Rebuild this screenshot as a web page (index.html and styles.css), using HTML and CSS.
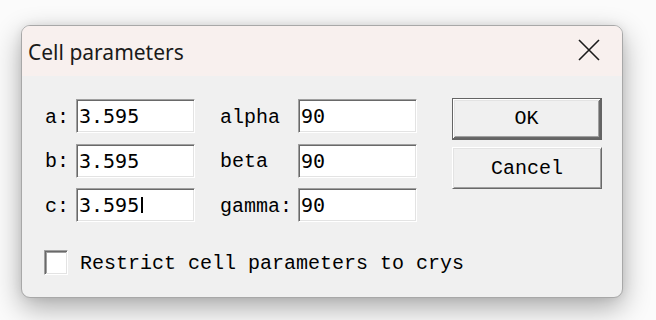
FILE: index.html
```html
<!DOCTYPE html>
<html lang="en">
<head>
    <meta charset="UTF-8">
    <meta name="viewport" content="width=device-width, initial-scale=1.0">
    <title>Cell parameters</title>
    <link rel="stylesheet" href="styles.css">
</head>
<body>

    <div class="window">
        <div class="titlebar">
            <span class="title">Cell parameters</span>
            <span class="close">
                <svg width="22" height="22" viewBox="0 0 22 22">
                    <path d="M1 1 L21 21 M21 1 L1 21" stroke="#1b1b1b" stroke-width="1.6" fill="none"/>
                </svg>
            </span>
        </div>

        <div class="content">
            <div class="top">
                <div class="params">
                    <span class="label">a:</span>
                    <span class="field">3.595</span>
                    <span class="label angle">alpha</span>
                    <span class="field">90</span>

                    <span class="label">b:</span>
                    <span class="field">3.595</span>
                    <span class="label angle">beta</span>
                    <span class="field">90</span>

                    <span class="label">c:</span>
                    <span class="field">3.595<span class="caret"></span></span>
                    <span class="label angle">gamma:</span>
                    <span class="field">90</span>
                </div>

                <div class="buttons">
                    <button class="btn default">OK</button>
                    <button class="btn">Cancel</button>
                </div>
            </div>

            <label class="check">
                <span class="box"></span>
                <span class="label">Restrict cell parameters to crys</span>
            </label>
        </div>
    </div>

</body>
</html>
```

FILE: styles.css
```css
* {
    margin: 0;
    padding: 0;
    box-sizing: border-box;
}

body {
    background-color: #fbfbfb;
    padding: 25px 0 0 21px;
    height: 100vh;
    overflow: hidden;
}

.window {
    width: 602px;
    height: 273px;
    background-color: #f0f0f0;
    border: 1px solid #a8a8a8;
    border-radius: 9px;
    overflow: hidden;
    box-shadow: 0 10px 28px rgba(0, 0, 0, 0.32), 0 0 10px rgba(0, 0, 0, 0.08);
}

.titlebar {
    height: 50px;
    background-color: #f8f0ee;
    display: flex;
    align-items: center;
    justify-content: space-between;
    padding: 2px 22px 0 6px;
}

.title {
    font-family: 'Noto Sans', sans-serif;
    font-size: 21px;
    color: #1a1a1a;
}

.close {
    display: flex;
    margin-top: -4px;
}

.content {
    padding: 23px 0 0 23px;
}

.top {
    display: flex;
    align-items: flex-start;
}

.params {
    display: grid;
    grid-template-columns: 31px 119px 103px 119px;
    grid-auto-rows: 34px;
    row-gap: 10.5px;
    align-items: center;
}

.label,
.btn {
    font-family: 'Courier New', 'Liberation Mono', 'Nimbus Mono PS', monospace;
    font-size: 20px;
    color: #000;
}

.label {
    white-space: pre;
    padding-top: 2px;
}

.label.angle {
    padding-left: 25px;
}

.field {
    height: 34px;
    display: flex;
    align-items: center;
    padding-left: 2px;
    background-color: #fff;
    border: 1px solid;
    border-color: #a0a0a0 #fff #fff #a0a0a0;
    box-shadow: inset 1px 1px #696969, inset -1px -1px #e3e3e3;
    font-family: 'DejaVu Sans Mono', monospace;
    font-size: 20px;
    color: #000;
}

.caret {
    display: inline-block;
    width: 2px;
    height: 16px;
    margin-left: 2px;
    background-color: #000;
}

.buttons {
    display: flex;
    flex-direction: column;
    gap: 7px;
    margin: -1px 0 0 35px;
}

.btn {
    width: 150px;
    height: 42px;
    background-color: #f0f0f0;
    border: 1px solid;
    border-color: #fff #696969 #696969 #fff;
    box-shadow: inset 1px 1px #e3e3e3, inset -1px -1px #a0a0a0;
}

.btn.default {
    border: 1px solid #646464;
    border-right-width: 2px;
    border-bottom-width: 2px;
    box-shadow: inset 1px 1px #fff, inset -1px -1px #696969, inset 2px 2px #e3e3e3, inset -2px -2px #a0a0a0;
}

.check {
    display: flex;
    align-items: center;
    gap: 12px;
    margin: 28px 0 0 -1px;
}

.box {
    width: 24px;
    height: 25px;
    background-color: #fff;
    border: 1px solid;
    border-color: #a0a0a0 #fff #fff #a0a0a0;
    box-shadow: inset 1px 1px #696969, inset -1px -1px #e3e3e3, inset 2px 2px #a0a0a0;
}
```
